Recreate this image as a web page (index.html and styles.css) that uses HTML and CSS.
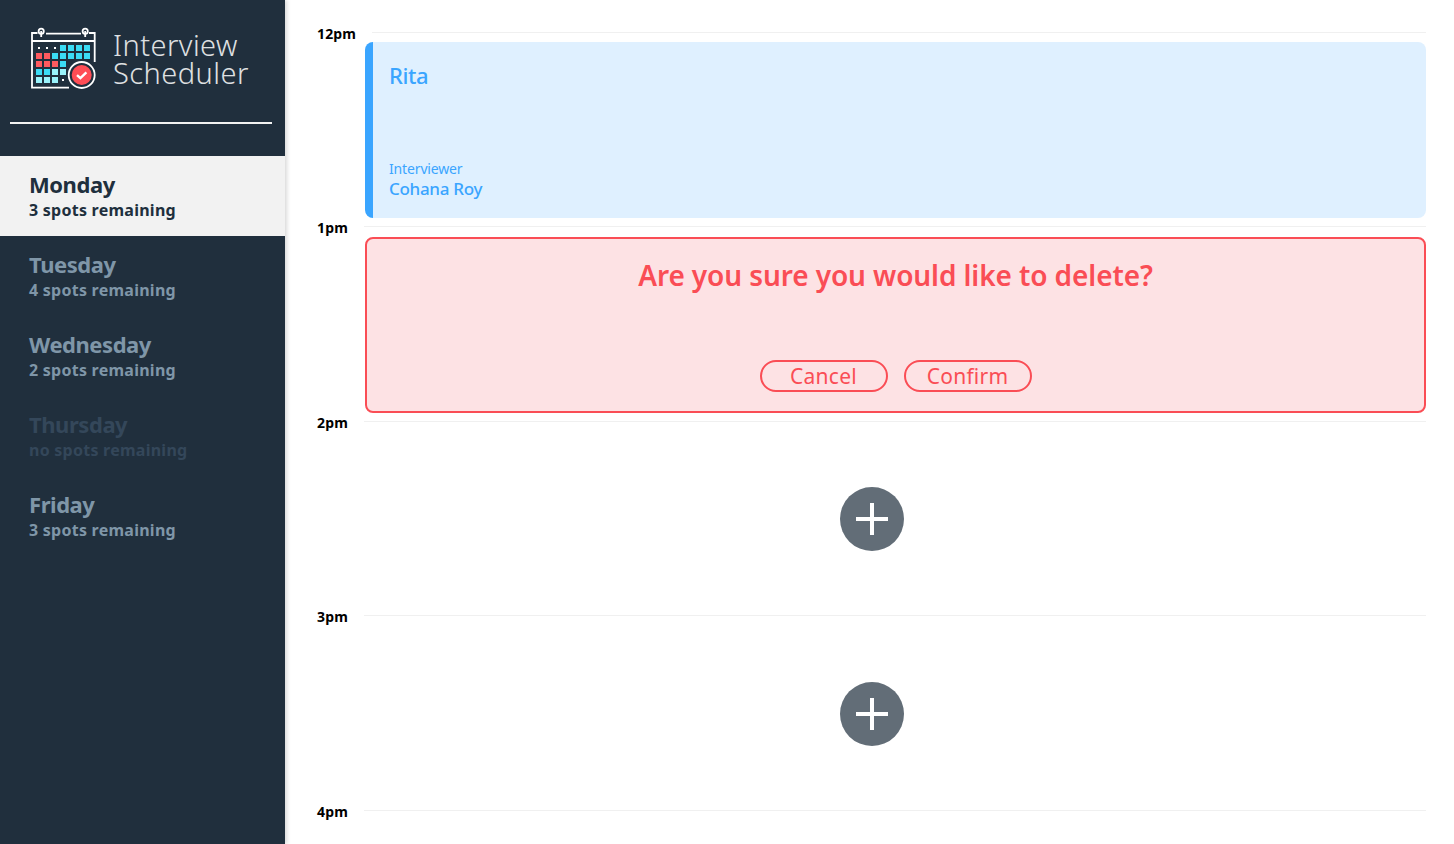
FILE: index.html
```
<!doctype html>
<html>
    <head>
        <meta charset="utf-8">
        <title>Interview Scheduler</title>
        <link rel="stylesheet" href="styles.css">
    </head>
    <body>
        <nav class="sidebar">
            <div class="brand">
                <svg class="brand-logo" width="68" height="64" viewBox="29 26 68 64">
                    <path d="M37.500 33H32V87.700H69M46 33.700H81M89 33H94.700V62M32 41H94.700" fill="none" stroke="#fff" stroke-width="1.800"/>
                    <circle cx="41.200" cy="31.200" r="2.600" fill="none" stroke="#fff" stroke-width="1.800"/>
                    <circle cx="85.200" cy="31.200" r="2.600" fill="none" stroke="#fff" stroke-width="1.800"/>
                    <path d="M41.200 31V37M85.200 31V37" stroke="#fff" stroke-width="1.800"/>
                    <g fill="#fff">
                        <rect x="38" y="47" width="2" height="2"/>
                        <rect x="46" y="47" width="2" height="2"/>
                        <rect x="54" y="47" width="2" height="2"/>
                        <rect x="62" y="79" width="2" height="2"/>
                    </g>
                    <g fill="#3bdcf5">
                        <rect x="60" y="45" width="6" height="6"/>
                        <rect x="68" y="45" width="6" height="6"/>
                        <rect x="76" y="45" width="6" height="6"/>
                        <rect x="84" y="45" width="6" height="6"/>
                        <rect x="52" y="53" width="6" height="6"/>
                        <rect x="60" y="53" width="6" height="6"/>
                        <rect x="68" y="53" width="6" height="6"/>
                        <rect x="76" y="53" width="6" height="6"/>
                        <rect x="84" y="53" width="6" height="6"/>
                        <rect x="60" y="61" width="6" height="6"/>
                        <rect x="36" y="69" width="6" height="6"/>
                        <rect x="44" y="69" width="6" height="6"/>
                    </g>
                    <g fill="#ff5a5f">
                        <rect x="36" y="53" width="6" height="6"/>
                        <rect x="44" y="53" width="6" height="6"/>
                        <rect x="36" y="61" width="6" height="6"/>
                        <rect x="44" y="61" width="6" height="6"/>
                        <rect x="52" y="61" width="6" height="6"/>
                    </g>
                    <g fill="#9af3fb">
                        <rect x="52" y="69" width="6" height="6"/>
                        <rect x="60" y="69" width="6" height="6"/>
                        <rect x="36" y="77" width="6" height="6"/>
                        <rect x="44" y="77" width="6" height="6"/>
                        <rect x="52" y="77" width="6" height="6"/>
                    </g>
                    <circle cx="81.700" cy="75" r="13" fill="#202f3d" stroke="#fff" stroke-width="1.800"/>
                    <circle cx="81.700" cy="75" r="10" fill="#ff4d55"/>
                    <path d="M77 75.200L80.400 78.200L86.400 72.400" fill="none" stroke="#fff" stroke-width="2.400"/>
                </svg>
                <div class="brand-name">Interview<br>Scheduler</div>
            </div>
            <hr class="brand-rule">
            <ul class="day-list">
                <li class="day selected"><h2>Monday</h2><p>3 spots remaining</p></li>
                <li class="day"><h2>Tuesday</h2><p>4 spots remaining</p></li>
                <li class="day"><h2>Wednesday</h2><p>2 spots remaining</p></li>
                <li class="day full"><h2>Thursday</h2><p>no spots remaining</p></li>
                <li class="day"><h2>Friday</h2><p>3 spots remaining</p></li>
            </ul>
        </nav>
        <main class="schedule">
            <section class="slot first">
                <div class="time">12pm</div>
                <div class="slot-body">
                    <div class="card">
                        <div class="student">Rita</div>
                        <div class="label">Interviewer</div>
                        <div class="interviewer">Cohana Roy</div>
                    </div>
                </div>
            </section>
            <section class="slot">
                <div class="time">1pm</div>
                <div class="slot-body pushed">
                    <div class="confirm">
                        <h1>Are you sure you would like to delete?</h1>
                        <div class="actions">
                            <button class="pill">Cancel</button>
                            <button class="pill">Confirm</button>
                        </div>
                    </div>
                </div>
            </section>
            <section class="slot">
                <div class="time">2pm</div>
                <div class="slot-body empty">
                    <button class="add" aria-label="Add">
                        <svg width="32" height="32" viewBox="0 0 32 32"><path d="M16 0V32M0 16H32" stroke="#fff" stroke-width="4"/></svg>
                    </button>
                </div>
            </section>
            <section class="slot">
                <div class="time">3pm</div>
                <div class="slot-body empty">
                    <button class="add" aria-label="Add">
                        <svg width="32" height="32" viewBox="0 0 32 32"><path d="M16 0V32M0 16H32" stroke="#fff" stroke-width="4"/></svg>
                    </button>
                </div>
            </section>
            <section class="slot last">
                <div class="time">4pm</div>
                <div class="slot-body"></div>
            </section>
        </main>
    </body>
</html>
```
FILE: styles.css
```
* {
    margin: 0;
    padding: 0;
    box-sizing: border-box;
}
html, body {
    height: 100%;
    overflow: hidden;
}
body {
    display: flex;
    background: #fff;
    font-family: "Noto Sans", sans-serif;
}
.sidebar {
    flex: 0 0 285px;
    background: #202f3d;
    box-shadow: 2px 0 4px rgba(0, 0, 0, 0.15);
}
.brand {
    display: flex;
    height: 122px;
    padding: 26px 0 0 29px;
    gap: 16px;
}
.brand-logo {
    display: block;
}
.brand-name {
    margin-top: 5px;
    color: #fff;
    font-size: 29px;
    font-weight: 300;
    letter-spacing: 0.45px;
    line-height: 28px;
    opacity: 0.85;
}
.brand-rule {
    width: 262px;
    height: 2px;
    margin: 0 0 32px 10px;
    border: 0;
    background: #f2f2f2;
}
.day-list {
    list-style: none;
}
.day {
    height: 80px;
    padding: 14px 0 0 29px;
    color: #7f96a8;
    font-weight: 700;
}
.day h2 {
    margin-bottom: 2px;
    font-size: 22px;
    letter-spacing: -0.45px;
    line-height: 28px;
}
.day p {
    font-size: 16px;
    letter-spacing: 0.25px;
    line-height: 20px;
}
.selected {
    background: #f2f2f2;
    color: #202f3d;
}
.full {
    color: #34475a;
}
.schedule {
    flex: 1;
    padding: 32px 28px 0 32px;
}
.slot {
    display: flex;
    height: 194.4px;
}
.last {
    height: 20px;
}
.time {
    flex: 0 0 47px;
    margin-top: -8px;
    font-size: 14px;
    font-weight: 700;
    letter-spacing: 0.15px;
    line-height: 20px;
    color: #000;
}
.first .time {
    flex-basis: 55px;
}
.slot-body {
    flex: 1;
    padding-top: 9px;
    border-top: 1px solid #f0f0f0;
}
.pushed {
    padding-top: 10px;
}
.card {
    display: flex;
    flex-direction: column;
    height: 176px;
    margin-left: -7px;
    padding: 18px 0 18px 16px;
    border-left: 8px solid #3aa5ff;
    border-radius: 8px;
    background: #dff0ff;
    color: #3aa5ff;
}
.student {
    flex: 1;
    font-size: 22px;
    font-weight: 500;
    letter-spacing: -0.4px;
    line-height: 30px;
}
.label {
    font-size: 14px;
    letter-spacing: -0.15px;
    line-height: 18px;
}
.interviewer {
    font-size: 17px;
    font-weight: 500;
    letter-spacing: -0.3px;
    line-height: 22px;
}
.confirm {
    display: flex;
    flex-direction: column;
    align-items: center;
    justify-content: space-between;
    height: 176px;
    margin-left: 1px;
    padding: 18px 0 19px;
    border: 2px solid #fa4d55;
    border-radius: 8px;
    background: #fde2e4;
    color: #fa4d55;
}
.confirm h1 {
    font-size: 28px;
    font-weight: 600;
    letter-spacing: -0.1px;
    line-height: 36px;
}
.actions {
    display: flex;
    gap: 16px;
}
.pill {
    width: 128px;
    height: 32px;
    border: 2px solid #fa4d55;
    border-radius: 16px;
    background: none;
    color: #fa4d55;
    font-family: inherit;
    font-size: 21px;
    letter-spacing: 0.25px;
    line-height: 26px;
}
.empty {
    display: flex;
    align-items: center;
    justify-content: center;
    padding: 2px 46px 0 0;
}
.add {
    display: flex;
    align-items: center;
    justify-content: center;
    width: 64px;
    height: 64px;
    border: 0;
    border-radius: 50%;
    background: #626d77;
}
```
